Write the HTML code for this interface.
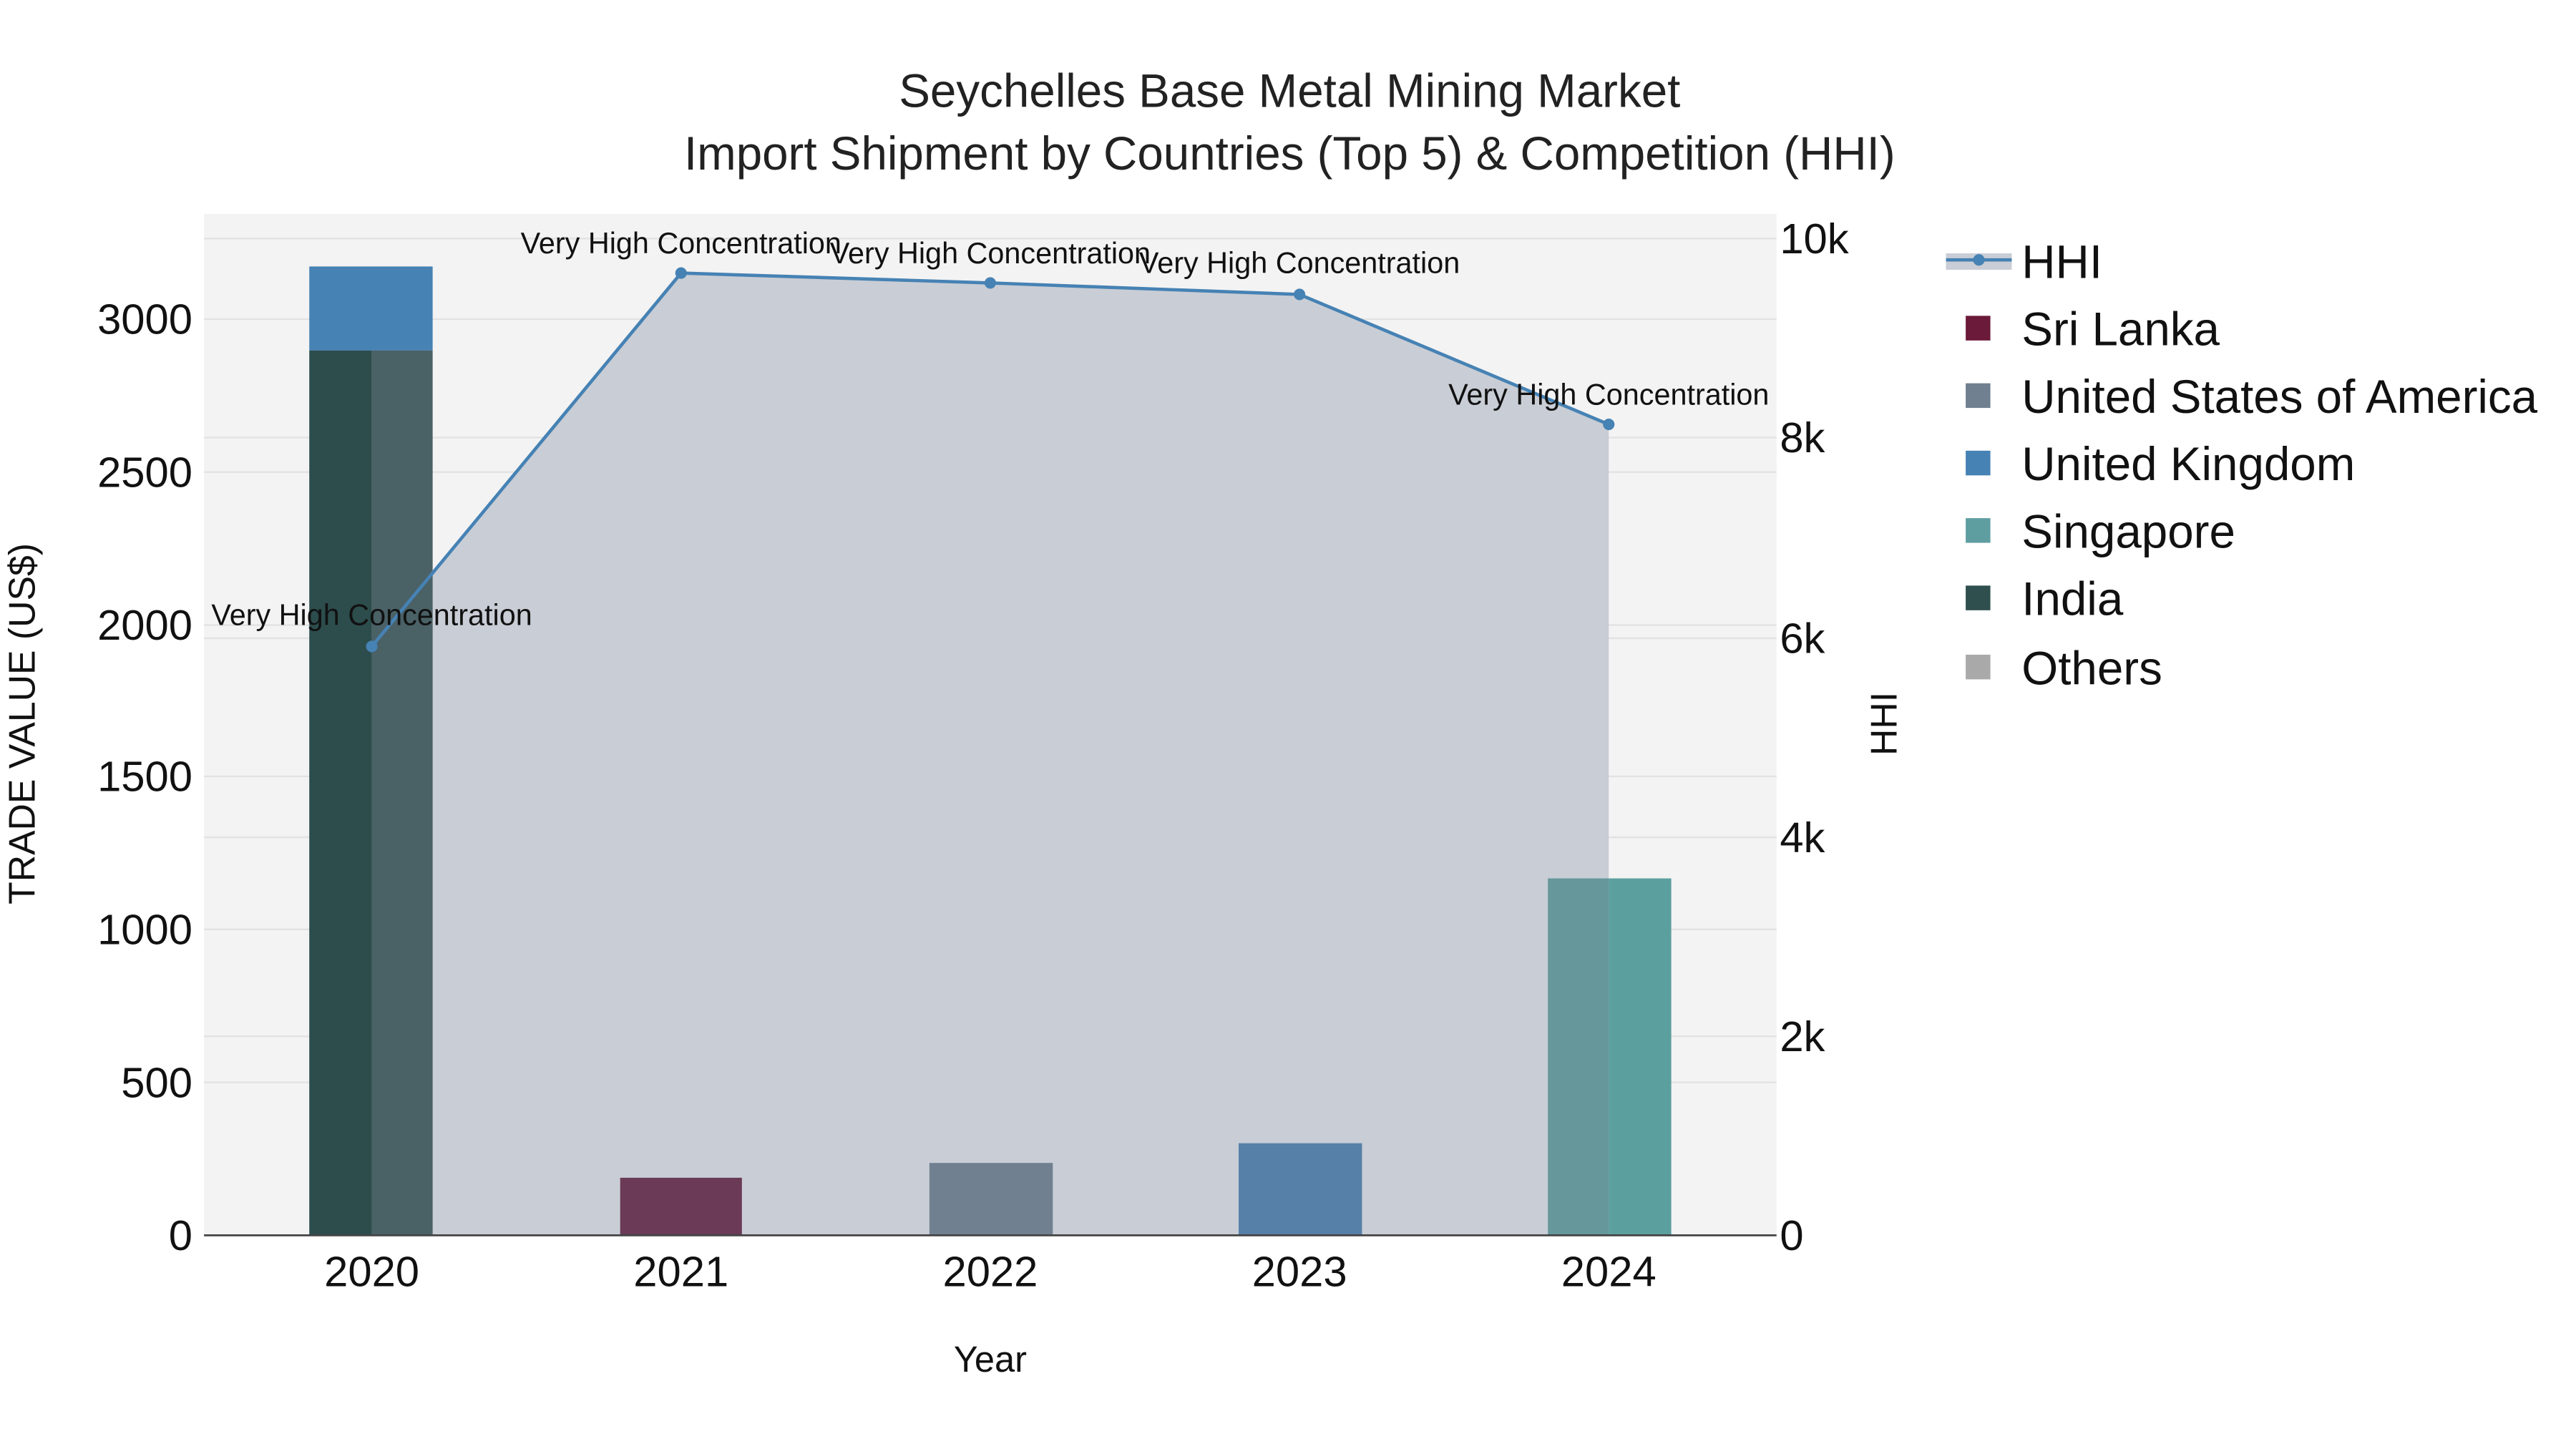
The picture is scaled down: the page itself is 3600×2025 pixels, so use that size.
<!DOCTYPE html>
<html><head><meta charset="utf-8"><style>html,body{margin:0;padding:0;background:#fff}svg{display:block}text{font-family:"Liberation Sans",sans-serif}</style></head>
<body>
<svg width="3600" height="2025" viewBox="0 0 1566 880.9" xmlns="http://www.w3.org/2000/svg">
<rect width="1566" height="880.9" fill="#fff"/>
<rect x="124" y="130" width="956" height="621" fill="#f3f3f3"/>
<g stroke="#e2e2e2" stroke-width="1">
<line x1="124" x2="1080" y1="658" y2="658"/><line x1="124" x2="1080" y1="565" y2="565"/><line x1="124" x2="1080" y1="472" y2="472"/><line x1="124" x2="1080" y1="380" y2="380"/><line x1="124" x2="1080" y1="287" y2="287"/><line x1="124" x2="1080" y1="194" y2="194"/>
<line x1="124" x2="1080" y1="630" y2="630"/><line x1="124" x2="1080" y1="509" y2="509"/><line x1="124" x2="1080" y1="388" y2="388"/><line x1="124" x2="1080" y1="266" y2="266"/><line x1="124" x2="1080" y1="145" y2="145"/>
</g>
<polygon points="226,751 226,393 414,166 602,172 790,179 978,258 978,751" fill="#c9cdd5"/>
<rect x="188" y="213" width="38" height="538" fill="#2d4d4d"/>
<rect x="226" y="213" width="37" height="538" fill="#4a6166"/>
<rect x="188" y="162" width="75" height="51" fill="#4682b4"/>
<rect x="377" y="716" width="74" height="35" fill="#6a3a56"/>
<rect x="565" y="707" width="75" height="44" fill="#708090"/>
<rect x="753" y="695" width="75" height="56" fill="#5780a8"/>
<rect x="941" y="534" width="37" height="217" fill="#66979a"/>
<rect x="978" y="534" width="38" height="217" fill="#5ba09f"/>
<line x1="124" x2="1080" y1="751" y2="751" stroke="#444" stroke-width="1.2"/>
<polyline points="226,393 414,166 602,172 790,179 978,258" fill="none" stroke="#4682b4" stroke-width="2"/>
<g fill="#4682b4"><circle cx="226" cy="393" r="3.5"/><circle cx="414" cy="166" r="3.5"/><circle cx="602" cy="172" r="3.5"/><circle cx="790" cy="179" r="3.5"/><circle cx="978" cy="258" r="3.5"/></g>
<g font-size="18" text-anchor="middle" fill="#111">
<text x="226" y="380">Very High Concentration</text><text x="414" y="154">Very High Concentration</text><text x="602" y="160">Very High Concentration</text><text x="790" y="166">Very High Concentration</text><text x="978" y="246">Very High Concentration</text>
</g>
<g font-size="28.5" text-anchor="middle" fill="#222">
<text x="784" y="65">Seychelles Base Metal Mining Market</text>
<text x="784" y="103">Import Shipment by Countries (Top 5) &amp; Competition (HHI)</text>
</g>
<g font-size="26" text-anchor="end" fill="#111">
<text x="117" y="760">0</text><text x="117" y="667">500</text><text x="117" y="574">1000</text><text x="117" y="481">1500</text><text x="117" y="389">2000</text><text x="117" y="296">2500</text><text x="117" y="203">3000</text>
</g>
<g font-size="26" fill="#111">
<text x="1082" y="760">0</text><text x="1082" y="639">2k</text><text x="1082" y="518">4k</text><text x="1082" y="397">6k</text><text x="1082" y="275">8k</text><text x="1082" y="154">10k</text>
</g>
<g font-size="26" text-anchor="middle" fill="#111">
<text x="226" y="782">2020</text><text x="414" y="782">2021</text><text x="602" y="782">2022</text><text x="790" y="782">2023</text><text x="978" y="782">2024</text>
</g>
<text x="602" y="834" font-size="22" text-anchor="middle" fill="#111">Year</text>
<text transform="translate(21,440) rotate(-90)" font-size="22.5" text-anchor="middle" fill="#111">TRADE VALUE (US$)</text>
<text transform="translate(1153,440) rotate(-90)" font-size="22.5" text-anchor="middle" fill="#111">HHI</text>
<rect x="1183" y="154" width="40" height="10" fill="#c9cdd5"/>
<line x1="1183" x2="1223" y1="158" y2="158" stroke="#4682b4" stroke-width="2"/>
<circle cx="1203" cy="158" r="3.5" fill="#4682b4"/>
<rect x="1195" y="192" width="15" height="15" fill="#6b1a3a"/>
<rect x="1195" y="233" width="15" height="15" fill="#708090"/>
<rect x="1195" y="274" width="15" height="15" fill="#4682b4"/>
<rect x="1195" y="315" width="15" height="15" fill="#5f9ea0"/>
<rect x="1195" y="356" width="15" height="15" fill="#2f4f4f"/>
<rect x="1195" y="398" width="15" height="15" fill="#a9a9a9"/>
<g font-size="28.5" fill="#111">
<text x="1229" y="169">HHI</text><text x="1229" y="210">Sri Lanka</text><text x="1229" y="251">United States of America</text><text x="1229" y="292">United Kingdom</text><text x="1229" y="333">Singapore</text><text x="1229" y="374">India</text><text x="1229" y="416">Others</text>
</g>
</svg>
</body></html>
